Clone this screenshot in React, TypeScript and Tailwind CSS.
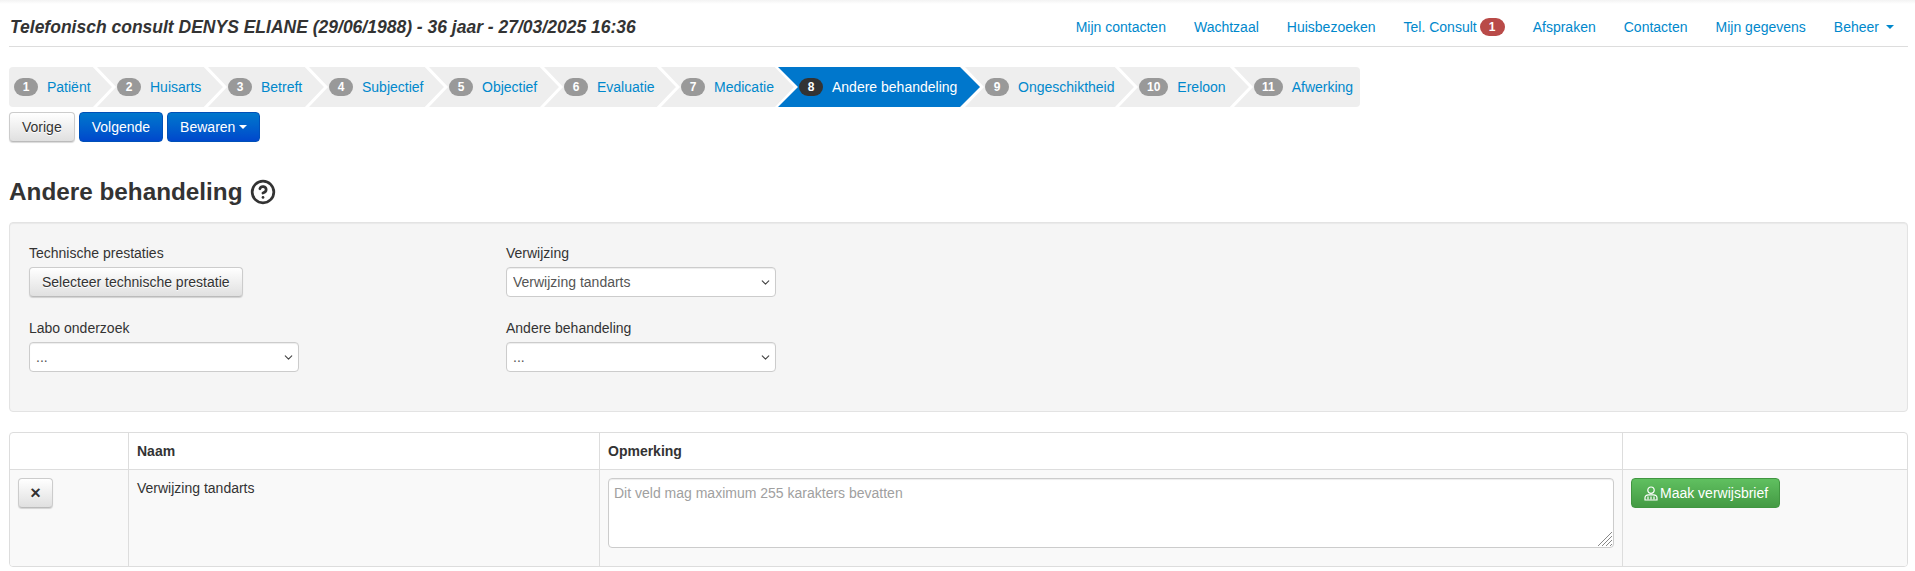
import { ChevronDown, CircleHelp } from "lucide-react";

const steps = [
  { label: "Patiënt", w: "w-[85px]" },
  { label: "Huisarts", w: "w-[111px]" },
  { label: "Betreft", w: "w-[101px]" },
  { label: "Subjectief", w: "w-[120px]" },
  { label: "Objectief", w: "w-[115px]" },
  { label: "Evaluatie", w: "w-[117px]" },
  { label: "Medicatie", w: "w-[118px]" },
  { label: "Andere behandeling", w: "w-[186px]" },
  { label: "Ongeschiktheid", w: "w-[154px]" },
  { label: "Ereloon", w: "w-[115px]" },
  { label: "Afwerking", w: "w-[129px]" },
];

const navLinks = ["Mijn contacten", "Wachtzaal", "Huisbezoeken"];
const navLinks2 = ["Afspraken", "Contacten", "Mijn gegevens"];

const btnDefault =
  "h-[30px] px-[12px] rounded-[4px] border border-[#ccc] border-b-[#bbb] bg-gradient-to-b from-white to-[#e0e0e0] text-[#333] [text-shadow:0_1px_0_#fff] shadow-[0_1px_1px_rgba(0,0,0,0.15)]";
const btnPrimary =
  "h-[30px] px-[12px] rounded-[4px] border border-[#0050b8] bg-gradient-to-b from-[#0077cc] to-[#0047cc] text-white";

function Caret({ className = "" }: { className?: string }) {
  return <span className={`inline-block w-0 h-0 border-x-[4px] border-x-transparent border-t-[4px] ${className}`} />;
}

function Step({ n, label, w, active, first, last }: { n: number; label: string; w: string; active: boolean; first: boolean; last: boolean }) {
  return (
    <li className={`relative flex items-center h-10 shrink-0 ${w} ${first ? "pl-[5px]" : "pl-[23px]"}`}>
      {active && (
        <span className="absolute top-0 bottom-0 left-[2px] -right-[18px] z-[5] bg-[#0077cc] [clip-path:polygon(0_0,calc(100%-20px)_0,100%_50%,calc(100%-20px)_100%,0_100%,20px_50%)]" />
      )}
      {!last && (
        <svg className="absolute top-0 -right-[23px] z-[1]" width="24" height="40" viewBox="0 0 24 40">
          <path d="M1 -1 L21 20 L1 41" fill="none" stroke="#fff" strokeWidth="3" />
        </svg>
      )}
      <span className={`relative z-20 h-[18px] min-w-[24px] px-[8px] rounded-[10px] text-white text-[12px] font-bold leading-[18px] text-center ${active ? "bg-[#333]" : "bg-[#999]"}`}>
        {n}
      </span>
      <span className={`relative z-20 ml-[9px] whitespace-nowrap ${active ? "text-white" : "text-[#0088cc]"}`}>{label}</span>
    </li>
  );
}

function Field({ label, value }: { label: string; value: string }) {
  return (
    <div className="w-[270px]">
      <div className="h-[21px] pt-px mb-[4px] text-[#333]">{label}</div>
      <div className="relative">
        <select
          defaultValue={value}
          className="block w-full h-[30px] appearance-none rounded-[4px] border border-[#ccc] bg-white text-[#555] pl-[6px] shadow-[inset_0_1px_1px_rgba(0,0,0,0.075)]"
        >
          <option>{value}</option>
        </select>
        <ChevronDown size={13} strokeWidth={2} className="absolute right-[4px] top-[9px] text-[#444] pointer-events-none" />
      </div>
    </div>
  );
}

function DoctorIcon() {
  return (
    <svg width="14" height="15" viewBox="0 0 14 15" fill="none" stroke="#fff" strokeWidth="1.2" className="shrink-0">
      <circle cx="7" cy="4.2" r="3.2" />
      <path d="M1 14 v-2.2 a3.6 3.2 0 0 1 3.6 -3 h4.8 a3.6 3.2 0 0 1 3.6 3 v2.2 z" />
      <path d="M4 10.5 v3 M7 10.5 v3 M10 10.5 v3" />
    </svg>
  );
}

export default function App() {
  return (
    <div className="min-h-[571px] bg-white text-[14px] leading-5 text-[#333] pl-[9px] pr-[7px] font-['Liberation_Sans',Arial,sans-serif] overflow-hidden">
      <div className="absolute top-0 left-0 right-0 h-[4px] bg-gradient-to-b from-[#f3f3f3] to-white" />
      <header className="flex items-center justify-between h-[47px] border-b border-[#ddd] pt-[7px]">
        <h1 className="text-[17.5px] font-bold italic leading-5 pl-px">Telefonisch consult DENYS ELIANE (29/06/1988) - 36 jaar - 27/03/2025 16:36</h1>
        <nav className="flex text-[#0088cc]">
          {navLinks.map((l) => (
            <a key={l} className="px-[14px]">{l}</a>
          ))}
          <a className="px-[14px] flex items-center">
            Tel. Consult
            <span className="ml-[3px] h-[18px] w-[25px] rounded-[10px] bg-[#b94a48] text-white text-[12px] font-bold leading-[18px] text-center">1</span>
          </a>
          {navLinks2.map((l) => (
            <a key={l} className="px-[14px]">{l}</a>
          ))}
          <a className="pl-[14px] pr-[14px] flex items-center">
            Beheer
            <Caret className="ml-[7px] border-t-[#0088cc]" />
          </a>
        </nav>
      </header>

      <ul className="mt-5 flex h-10 w-[1351px] rounded-[4px] bg-[#eee] overflow-hidden">
        {steps.map((s, i) => (
          <Step key={s.label} n={i + 1} label={s.label} w={s.w} active={i === 7} first={i === 0} last={i === steps.length - 1} />
        ))}
      </ul>

      <div className="mt-[5px] flex gap-1">
        <button className={btnDefault}>Vorige</button>
        <button className={btnPrimary}>Volgende</button>
        <button className={`${btnPrimary} flex items-center`}>
          Bewaren
          <Caret className="ml-[4px] border-t-white" />
        </button>
      </div>

      <h2 className="mt-[35px] h-[30px] flex items-center text-[24.3px] font-bold leading-[30px]">
        Andere behandeling
        <CircleHelp size={26} strokeWidth={2.5} className="ml-[7px]" />
      </h2>

      <section className="mt-[15px] h-[190px] rounded-[4px] border border-[#e3e3e3] bg-[#f5f5f5] pt-[19px] pl-[19px] shadow-[inset_0_1px_1px_rgba(0,0,0,0.05)]">
        <div className="grid grid-cols-[477px_270px] gap-y-[20px]">
          <div>
            <div className="h-[21px] pt-px mb-[4px]">Technische prestaties</div>
            <button className={btnDefault}>Selecteer technische prestatie</button>
          </div>
          <Field label="Verwijzing" value="Verwijzing tandarts" />
          <Field label="Labo onderzoek" value="..." />
          <Field label="Andere behandeling" value="..." />
        </div>
      </section>

      <div className="mt-[20px] h-[135px] rounded-[4px] border border-[#ddd] overflow-hidden">
        <div className="flex h-[37px] border-b border-[#ddd] font-bold">
          <div className="w-[119px] border-r border-[#ddd]" />
          <div className="w-[471px] border-r border-[#ddd] px-2 pt-2">Naam</div>
          <div className="w-[1023px] border-r border-[#ddd] px-2 pt-2">Opmerking</div>
          <div className="flex-1" />
        </div>
        <div className="flex h-[96px] bg-[#f9f9f9]">
          <div className="w-[119px] border-r border-[#ddd] pl-2 pt-2">
            <button className={`${btnDefault} w-[35px] !px-0 font-bold text-[18px] leading-none`}>×</button>
          </div>
          <div className="w-[471px] border-r border-[#ddd] px-2 pt-2">Verwijzing tandarts</div>
          <div className="w-[1023px] border-r border-[#ddd] p-2">
            <div className="relative">
              <textarea
                placeholder="Dit veld mag maximum 255 karakters bevatten"
                className="block w-full h-[70px] resize-none rounded-[4px] border border-[#ccc] bg-white px-[5px] py-[4px] text-[#555] placeholder:text-[#a0a0a0] shadow-[inset_0_1px_1px_rgba(0,0,0,0.075)]"
              />
              <svg className="absolute right-[2px] bottom-[2px] pointer-events-none" width="14" height="14" viewBox="0 0 14 14" stroke="#888" strokeWidth="1">
                <path d="M0 14 L14 0 M4 14 L14 4 M8 14 L14 8 M12 14 L14 12" />
              </svg>
            </div>
          </div>
          <div className="flex-1 pl-2 pt-2">
            <button className="h-[30px] pl-[12px] pr-[11px] flex items-center gap-[2px] rounded-[4px] border border-[#419641] bg-gradient-to-b from-[#60c060] to-[#449a44] text-white">
              <DoctorIcon />
              Maak verwijsbrief
            </button>
          </div>
        </div>
      </div>
    </div>
  );
}
